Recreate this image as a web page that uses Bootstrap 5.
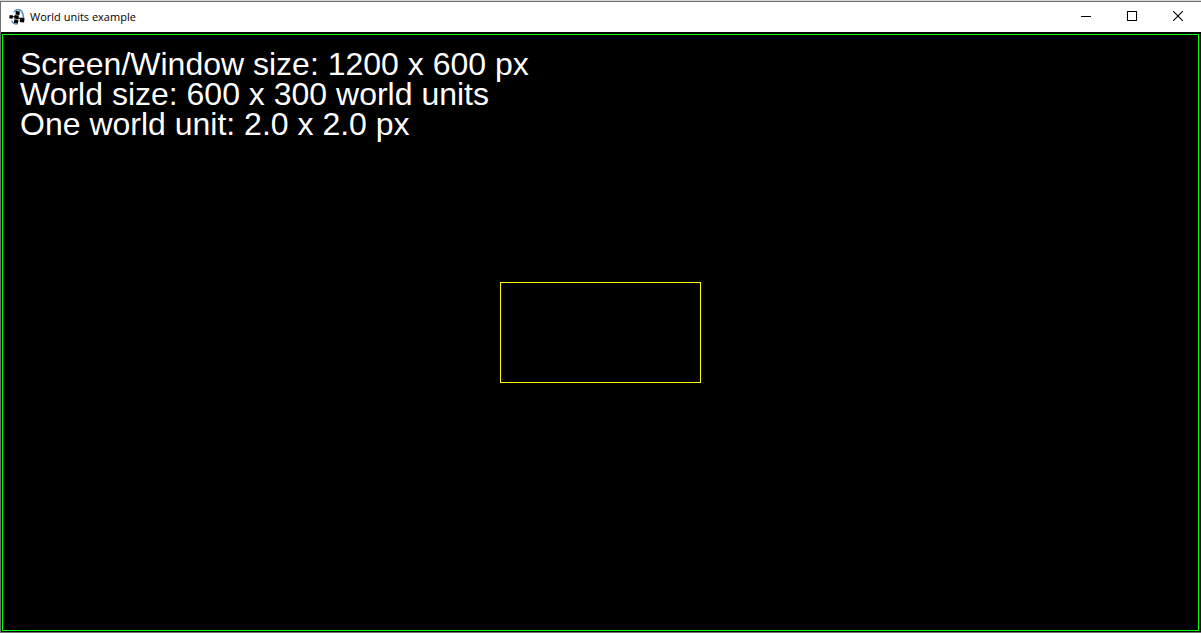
<!DOCTYPE html>
<html lang="en">
<head>
<meta charset="utf-8">
<meta name="viewport" content="width=device-width, initial-scale=1">
<title>World units example</title>
<link href="https://cdn.jsdelivr.net/npm/bootstrap@5.3.0/dist/css/bootstrap.min.css" rel="stylesheet">
<style>
  .app-window { border: 1px solid #707070; border-right: 0; background: #000; }
  .desktop-edge { height: 1px; background: #d4d4d4; }
  .title-bar { height: 30px; padding-left: 8px; font: 11px/16px "Open Sans", sans-serif; color: #000; }
  .title-icon { width: 16px; height: 16px; margin-right: 5px; }
  .caption-btn { width: 46px; height: 28px; color: #000; }
  .viewport-area { padding: 2px 2px 1px 1px; }
  .world-bounds { border: 1px solid #0f0; grid-template: 1fr / 1fr; }
  .world-bounds > * { grid-area: 1 / 1; }
  .world-info { padding: 14px 17px; font: 32px/30px "Liberation Sans", sans-serif; color: #fff; }
  .unit-rect { width: 201px; height: 101px; border: 1px solid #ff0; }
</style>
</head>
<body class="vh-100 d-flex flex-column overflow-hidden">
<div class="desktop-edge flex-shrink-0"></div>
<div class="app-window d-flex flex-column flex-grow-1">
  <header class="title-bar bg-white d-flex align-items-center flex-shrink-0">
    <svg class="title-icon" viewBox="0 0 16 16" aria-hidden="true">
      <path d="M5 3C6.500 .300 10.500-.200 12.500 2.200 14.200 4.200 14.600 6.500 14.300 9" fill="none" stroke="#4f8fc4" stroke-width="1.600"/>
      <path d="M2.500 11.500C3.500 13.800 6 15.300 8.500 15" fill="none" stroke="#4f8fc4" stroke-width="1.400"/>
      <g fill="#000">
        <path d="M6.900 1.900l4 .6-.5 3.700-4-.6z"/>
        <path d="M.7 6l3.400.500-.5 3.300-3.400-.5z"/>
        <path d="M5.600 6l4.200.600-.5 3.600-4.200-.6z"/>
        <path d="M5.400 10.200l4 .6-.5 3.600-4-.6z"/>
        <path d="M11.300 8.600l4.300.600-.6 4.400-4.300-.6z"/>
        <path d="M3.500 7.300h2.500v1h-2.500zM9 8.200l3 1v1.200l-3-.8z"/>
      </g>
    </svg>
    <span>World units example</span>
    <div class="d-flex ms-auto align-self-start">
      <button type="button" class="caption-btn border-0 bg-transparent p-0 d-flex align-items-center justify-content-center" aria-label="Minimize">
        <svg width="10" height="10" shape-rendering="crispEdges"><path d="M0 5h10v1H0z"/></svg>
      </button>
      <button type="button" class="caption-btn border-0 bg-transparent p-0 d-flex align-items-center justify-content-center" aria-label="Maximize">
        <svg width="10" height="10" shape-rendering="crispEdges"><path d="M0 0h10v10H0zM1 1v8h8V1z" fill-rule="evenodd"/></svg>
      </button>
      <button type="button" class="caption-btn border-0 bg-transparent p-0 d-flex align-items-center justify-content-center" aria-label="Close">
        <svg width="10" height="10"><path d="M0 0l10 10M10 0L0 10" stroke="#000" stroke-width="1.100"/></svg>
      </button>
    </div>
  </header>
  <main class="viewport-area d-flex flex-grow-1">
    <div class="world-bounds d-grid flex-grow-1">
      <div class="world-info">
        <div>Screen/Window size: 1200 x 600 px</div>
        <div>World size: 600 x 300 world units</div>
        <div>One world unit: 2.0 x 2.0 px</div>
      </div>
      <div class="unit-rect align-self-center mx-auto"></div>
    </div>
  </main>
</div>
<script src="https://cdn.jsdelivr.net/npm/bootstrap@5.3.0/dist/js/bootstrap.bundle.min.js"></script>
</body>
</html>
